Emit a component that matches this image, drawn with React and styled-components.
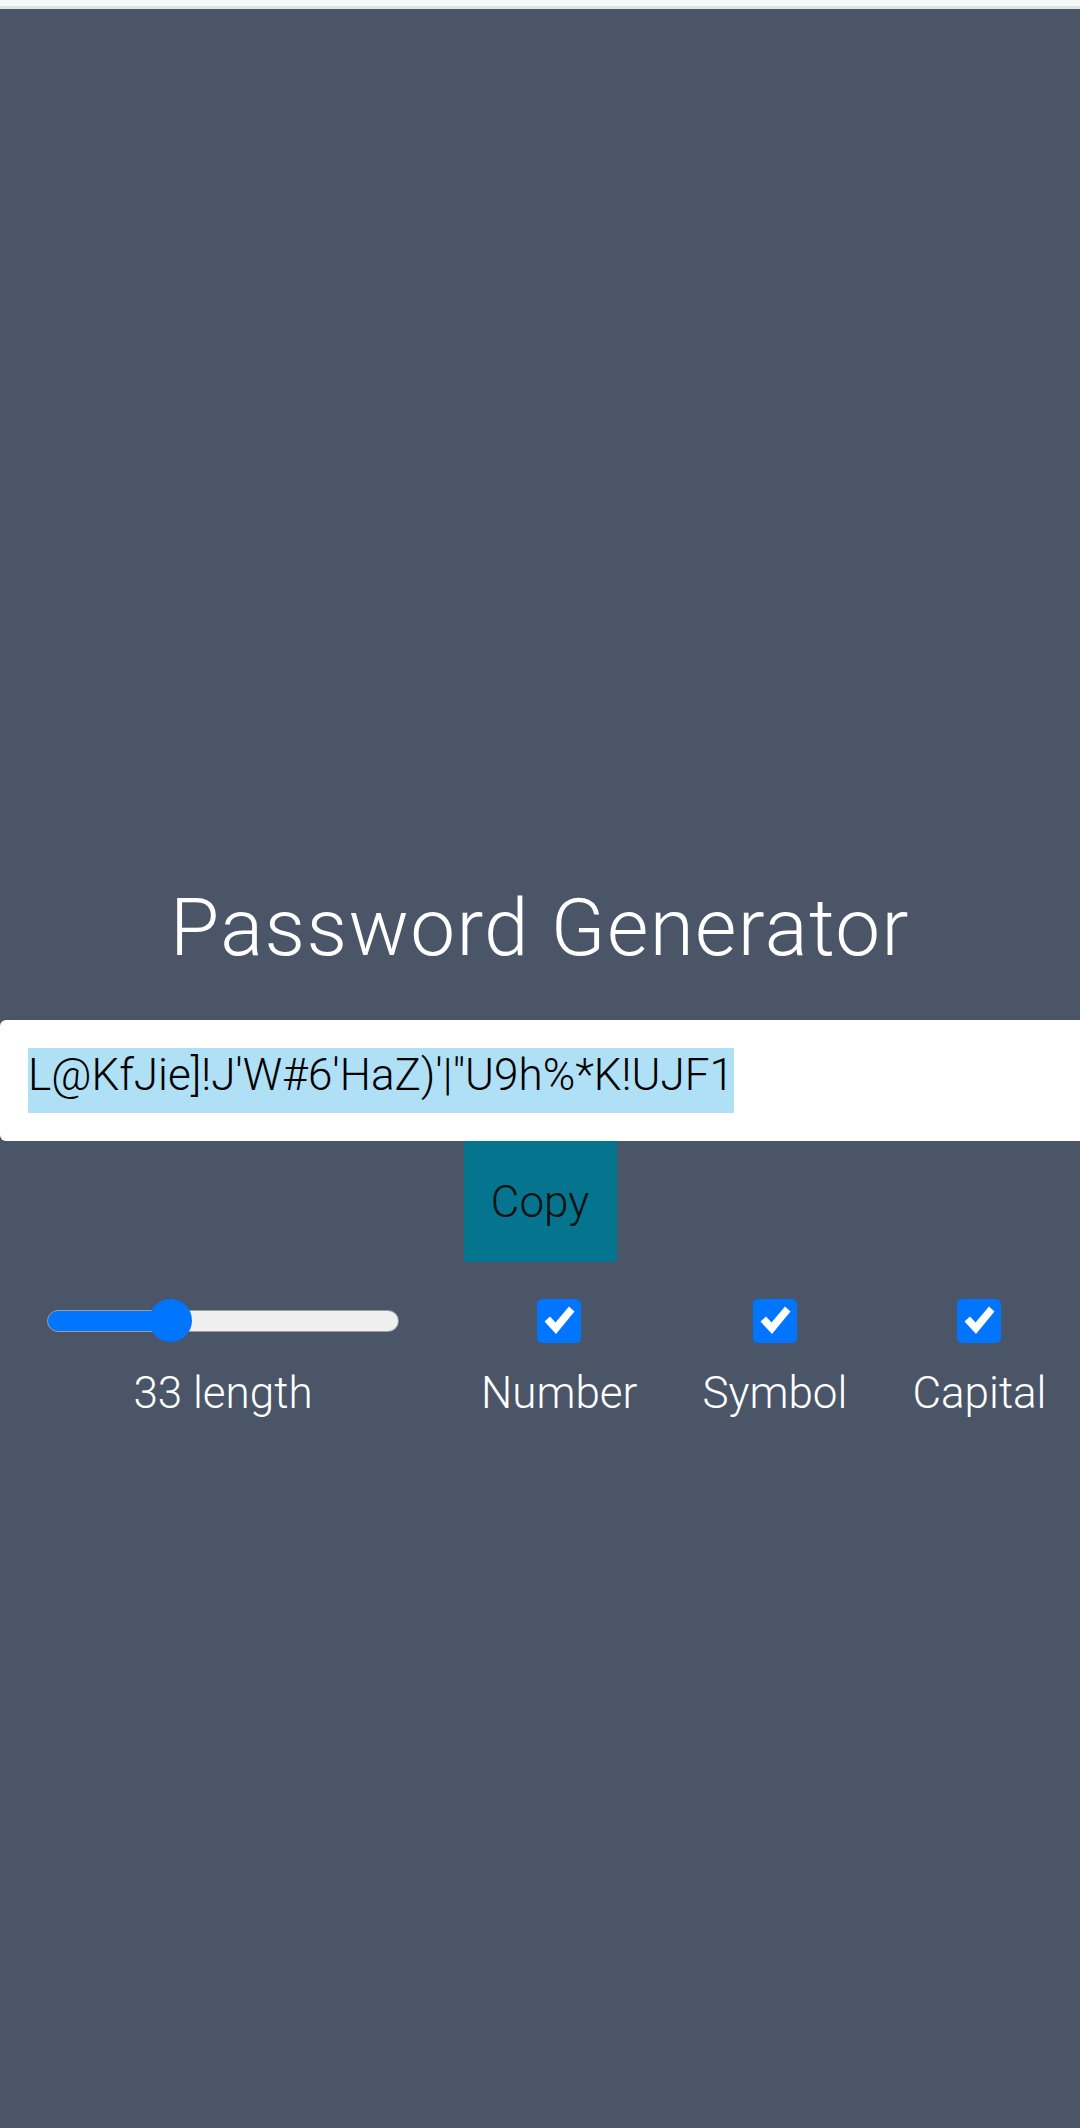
import React, { useState } from "react";
import styled, { createGlobalStyle } from "styled-components";

const GlobalStyle = createGlobalStyle`
  html, body {
    margin: 0;
    padding: 0;
    background: #4a5568;
  }
  body {
    font-family: Roboto, "Liberation Sans", Arial, sans-serif;
    -webkit-font-smoothing: antialiased;
  }
  * { box-sizing: border-box; }
`;

const TopStrip = styled.div`
  height: 9px;
  background: #f4f9f8;
  border-bottom: 3px solid #dce3e3;
`;

const Main = styled.main`
  padding-top: 872px;
  display: flex;
  flex-direction: column;
`;

const Title = styled.h1`
  margin: 0 0 45px;
  text-align: center;
  font-size: 80px;
  font-weight: 300;
  letter-spacing: 1.4px;
  line-height: normal;
  color: #ffffff;
`;

const PasswordBox = styled.div`
  height: 121px;
  display: flex;
  align-items: flex-start;
  padding: 28px 28px 0;
  background: #ffffff;
  border-radius: 6px 0 0 6px;
  overflow: hidden;
  white-space: nowrap;
`;

const PasswordText = styled.span`
  display: inline-block;
  font-size: 44px;
  font-weight: 300;
  line-height: 54px;
  padding-bottom: 11px;
  color: #000000;
  background: ${(p) => (p.$selected ? "#afe0f5" : "transparent")};
`;

const CopyButton = styled.button`
  align-self: center;
  width: 153px;
  height: 121px;
  padding: 0;
  border: none;
  border-radius: 0 0 3px 3px;
  background: #04748f;
  color: #111111;
  font-family: inherit;
  font-size: 44px;
  font-weight: 300;
  cursor: pointer;
`;

const Controls = styled.div`
  display: flex;
  align-items: flex-start;
  gap: 65px;
  padding-left: 47px;
  margin-top: 37px;
`;

const Option = styled.label`
  display: flex;
  flex-direction: column;
  align-items: center;
  gap: 24px;
  width: ${(p) => (p.$width ? `${p.$width}px` : "auto")};
  margin-right: ${(p) => p.$extra || 0}px;
`;

const ControlSlot = styled.div`
  height: 44px;
  width: 100%;
  display: flex;
  align-items: center;
  justify-content: center;
`;

const OptionLabel = styled.span`
  font-size: 44px;
  font-weight: 300;
  line-height: normal;
  color: #ffffff;
  white-space: nowrap;
`;

const Range = styled.input.attrs({ type: "range" })`
  -webkit-appearance: none;
  appearance: none;
  width: 100%;
  height: 44px;
  margin: 0;
  background: transparent;

  &::-webkit-slider-runnable-track {
    height: 22px;
    border-radius: 11px;
    border: 1.5px solid #9c9c9c;
    background: linear-gradient(
      to right,
      #0075ff var(--fill),
      #efefef var(--fill)
    );
  }

  &::-webkit-slider-thumb {
    -webkit-appearance: none;
    appearance: none;
    width: 43px;
    height: 43px;
    margin-top: -12px;
    border-radius: 50%;
    border: none;
    background: #0075ff;
  }
`;

const HiddenCheck = styled.input.attrs({ type: "checkbox" })`
  position: absolute;
  opacity: 0;
  width: 0;
  height: 0;
  margin: 0;
`;

const CheckBox = styled.span`
  width: 44px;
  height: 44px;
  border-radius: 5px;
  background: ${(p) => (p.$checked ? "#0075ff" : "#ffffff")};
  border: ${(p) => (p.$checked ? "none" : "2px solid #767676")};
  display: flex;
  align-items: center;
  justify-content: center;
`;

function Check({ checked, onChange }) {
  return (
    <>
      <HiddenCheck checked={checked} onChange={onChange} />
      <CheckBox $checked={checked}>
        {checked && (
          <svg width="44" height="44" viewBox="0 0 44 44">
            <path
              d="M7.5 22.5 L13 17.5 L18.5 23.5 L32 7.5 L37.5 12.5 L19 35 Z"
              fill="#ffffff"
            />
          </svg>
        )}
      </CheckBox>
    </>
  );
}

export default function App() {
  const [length, setLength] = useState(33);
  const [opts, setOpts] = useState({ number: true, symbol: true, capital: true });
  const password = "L@KfJie]!J'W#6'HaZ)'|\"U9h%*K!UJF1";
  const fill = `${length}%`;

  const toggle = (k) => () => setOpts((o) => ({ ...o, [k]: !o[k] }));

  return (
    <>
      <GlobalStyle />
      <TopStrip />
      <Main>
        <Title>Password Generator</Title>
        <PasswordBox>
          <PasswordText $selected>{password}</PasswordText>
        </PasswordBox>
        <CopyButton>Copy</CopyButton>
        <Controls>
          <Option $width={352} $extra={17}>
            <ControlSlot>
              <Range
                min={0}
                max={100}
                value={length}
                onChange={(e) => setLength(Number(e.target.value))}
                style={{ "--fill": fill }}
              />
            </ControlSlot>
            <OptionLabel>{length} length</OptionLabel>
          </Option>
          <Option>
            <ControlSlot>
              <Check checked={opts.number} onChange={toggle("number")} />
            </ControlSlot>
            <OptionLabel>Number</OptionLabel>
          </Option>
          <Option>
            <ControlSlot>
              <Check checked={opts.symbol} onChange={toggle("symbol")} />
            </ControlSlot>
            <OptionLabel>Symbol</OptionLabel>
          </Option>
          <Option>
            <ControlSlot>
              <Check checked={opts.capital} onChange={toggle("capital")} />
            </ControlSlot>
            <OptionLabel>Capital</OptionLabel>
          </Option>
        </Controls>
      </Main>
    </>
  );
}
